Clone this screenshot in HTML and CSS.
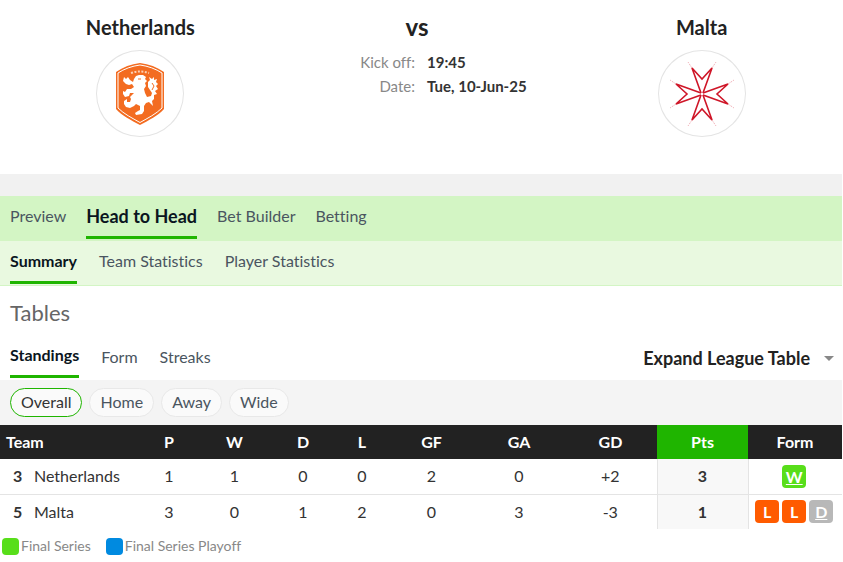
FILE: index.html
```html
<!DOCTYPE html>
<html lang="en">

<head>
    <meta charset="UTF-8">
    <meta name="viewport" content="width=device-width, initial-scale=1.0">
    <title>Netherlands vs Malta</title>
    <link rel="stylesheet" href="styles.css">
</head>

<body>
    <div class="container">
        <!-- match header -->
        <header class="match">
            <div class="team">
                <h2 class="team-name">Netherlands</h2>
                <div class="team-logo">
                    <svg width="48" height="62" viewBox="0 0 48 62" role="img" aria-label="Netherlands">
                        <path fill="#f36c21" d="M24 0C33 1 41 4 48 9V46C42 53 33 57 24 62C15 57 6 53 0 46V9C7 4 15 1 24 0Z"/>
                        <path fill="none" stroke="#fff" stroke-width="1" d="M24 2C32 3 40 6 46 10V45C40 51 32 55 24 59.500C16 55 8 51 2 45V10C8 6 16 3 24 2Z"/>
                        <path fill="none" stroke="#fbd0b4" stroke-width="2" stroke-dasharray="2 1.500" d="M15 10Q24 7 33 10"/>
                        <path fill="#fff" d="M18 16L20 13L23 12L27 12L30 14L29 16L31 18L29 20L30 23L28 26L29 30L31 34L35 33L36 30L34 27L32 24L32 19L34 17L33 14L36 16L38 14L38 17L41 16L40 19L42 21L40 23L42 26L39 28L41 31L38 32L38 36L36 38L37 43L35 41L33 39L30 40L28 43L28 48L26 51L20 52L19 50L22 48L24 47L24 43L20 41L18 43L14 45L10 44L8 41L8 38L11 36L11 39L14 39L15 36L14 34L18 30L14 30L13 33L9 34L7 31L7 28L9 29L11 26L15 26L18 24L16 21L13 22L10 21L7 18L8 14L10 16L12 14L14 17L17 19Z"/>
                        <path fill="none" stroke="#f36c21" stroke-width="1" d="M22 16L25 16M36 20L38 23L36 27"/>
                    </svg>
                </div>
            </div>
            <div class="info">
                <h2 class="vs">vs</h2>
                <dl class="info-list">
                    <dt>Kick off:</dt>
                    <dd>19:45</dd>
                    <dt>Date:</dt>
                    <dd>Tue, 10-Jun-25</dd>
                </dl>
            </div>
            <div class="team">
                <h2 class="team-name">Malta</h2>
                <div class="team-logo">
                    <svg width="64" height="64" viewBox="0 0 64 64" role="img" aria-label="Malta">
                        <g fill="none" stroke="#f2b6bd" stroke-width="1" stroke-dasharray="2 1">
                            <path d="M22 6L18 0M42 6L46 0M22 58L18 64M42 58L46 64M6 22L0 18M6 42L0 46M58 22L64 18M58 42L64 46"/>
                        </g>
                        <g fill="none" stroke="#cf1628" stroke-width="1.600">
                            <path d="M31 31L22 6L32 17L42 6L33 31"/>
                            <path d="M31 33L22 58L32 47L42 58L33 33"/>
                            <path d="M31 31L6 22L17 32L6 42L31 33"/>
                            <path d="M33 31L58 22L47 32L58 42L33 33"/>
                        </g>
                    </svg>
                </div>
            </div>
        </header>

        <!-- main tabs -->
        <nav class="tabs tabs-main">
            <a href="#preview">Preview</a>
            <a href="#h2h" class="active">Head to Head</a>
            <a href="#builder">Bet Builder</a>
            <a href="#betting">Betting</a>
        </nav>
        <nav class="tabs tabs-sub">
            <a href="#summary" class="active">Summary</a>
            <a href="#team-stats">Team Statistics</a>
            <a href="#player-stats">Player Statistics</a>
        </nav>

        <h3 class="title">Tables</h3>

        <div class="table-bar">
            <nav class="tabs tabs-table">
                <a href="#standings" class="active">Standings</a>
                <a href="#form">Form</a>
                <a href="#streaks">Streaks</a>
            </nav>
            <button type="button" class="expand-btn">Expand League Table</button>
        </div>

        <div class="filter">
            <button type="button" class="filter-btn active">Overall</button>
            <button type="button" class="filter-btn">Home</button>
            <button type="button" class="filter-btn">Away</button>
            <button type="button" class="filter-btn">Wide</button>
        </div>

        <!-- standings -->
        <table class="standings">
            <colgroup>
                <col class="col-team">
                <col class="col-p">
                <col class="col-w">
                <col class="col-d">
                <col class="col-l">
                <col class="col-gf">
                <col class="col-ga">
                <col class="col-gd">
                <col class="col-pts">
                <col class="col-form">
            </colgroup>
            <thead>
                <tr>
                    <th class="name">Team</th>
                    <th>P</th>
                    <th>W</th>
                    <th>D</th>
                    <th>L</th>
                    <th>GF</th>
                    <th>GA</th>
                    <th>GD</th>
                    <th class="pts">Pts</th>
                    <th>Form</th>
                </tr>
            </thead>
            <tbody>
                <tr>
                    <td class="name"><b class="rank">3</b>Netherlands</td>
                    <td>1</td>
                    <td>1</td>
                    <td>0</td>
                    <td>0</td>
                    <td>2</td>
                    <td>0</td>
                    <td>+2</td>
                    <td class="pts">3</td>
                    <td>
                        <div class="form">
                            <a href="#match" class="win last">W</a>
                        </div>
                    </td>
                </tr>
                <tr>
                    <td class="name"><b class="rank">5</b>Malta</td>
                    <td>3</td>
                    <td>0</td>
                    <td>1</td>
                    <td>2</td>
                    <td>0</td>
                    <td>3</td>
                    <td>-3</td>
                    <td class="pts">1</td>
                    <td>
                        <div class="form">
                            <a href="#match" class="loss">L</a>
                            <a href="#match" class="loss">L</a>
                            <a href="#match" class="draw last">D</a>
                        </div>
                    </td>
                </tr>
            </tbody>
        </table>

        <ul class="legend">
            <li class="final">Final Series</li>
            <li class="playoff">Final Series Playoff</li>
        </ul>
    </div>
</body>

</html>
```
FILE: styles.css
```css
* {
    margin: 0;
    padding: 0;
    box-sizing: border-box;
}

body {
    font-family: Lato, "Liberation Sans", sans-serif;
    font-size: 16px;
    line-height: 24px;
    font-variant-ligatures: none;
    color: #333;
    background-color: #fff;
}

a {
    color: inherit;
    text-decoration: none;
}

button {
    font: inherit;
    font-variant-ligatures: none;
    cursor: pointer;
}

.container {
    padding-right: 1px;
}

/* match header */
.match {
    display: grid;
    grid-template-columns: repeat(3, 1fr);
    padding: 15px 0 37px;
    border-bottom: 22px solid #f1f1f1;
}

.team {
    display: flex;
    flex-direction: column;
    align-items: center;
    gap: 11px;
}

.team-name,
.vs {
    font-size: 20px;
    line-height: 24px;
    font-weight: bold;
    color: #222;
}

.vs {
    font-size: 24px;
    text-align: center;
    padding-right: 8px;
}

.team-logo {
    display: flex;
    align-items: center;
    justify-content: center;
    width: 88px;
    height: 87px;
    border: 1px solid #e4e4e4;
    border-radius: 50%;
}

.info-list {
    display: grid;
    grid-template-columns: 1fr 1fr;
    column-gap: 12px;
    margin-top: 11px;
    font-size: 15px;
}

.info-list dt {
    text-align: right;
    color: #888;
}

.info-list dd {
    font-weight: bold;
    white-space: nowrap;
}

/* tabs */
.tabs {
    display: flex;
    gap: 22px;
    padding: 0 10px;
    color: #4a5560;
}

.tabs a {
    padding: 8px 0;
    border-bottom: 3px solid transparent;
}

.tabs .active {
    font-weight: bold;
    color: #0a1520;
    border-bottom-color: #1fb500;
}

.tabs-main {
    gap: 20px;
    background-color: #d3f5c4;
    padding-bottom: 2px;
}

.tabs-main .active {
    font-size: 18px;
}

.tabs-sub {
    background-color: #e9f9e0;
    padding-bottom: 1px;
    border-bottom: 1px solid #d3f5c4;
}

.title {
    padding: 15px 10px 0;
    font-size: 22px;
    font-weight: normal;
    color: #666;
}

.table-bar {
    display: flex;
    align-items: flex-end;
    justify-content: space-between;
    padding: 10px 8px 2px 0;
}

.tabs-table a:not(.active) {
    padding: 10px 0 6px;
}

.expand-btn {
    display: flex;
    align-items: center;
    gap: 14px;
    padding-bottom: 8px;
    border: none;
    background: none;
    font-size: 18px;
    font-weight: bold;
    color: #222;
}

.expand-btn::after {
    content: "";
    border: 5px solid transparent;
    border-top-color: #888;
    border-bottom: none;
}

/* filters */
.filter {
    display: flex;
    gap: 7px;
    padding: 8px 10px;
    background-color: #f4f4f4;
}

.filter-btn {
    height: 29px;
    padding: 0 10px 2px;
    border: 1px solid #e8e8e8;
    border-radius: 15px;
    background-color: #fafafa;
    color: #4a5560;
}

.filter-btn.active {
    border-color: #1fb500;
    color: #333;
}

/* standings */
.standings {
    width: 100%;
    table-layout: fixed;
    border-collapse: collapse;
    text-align: center;
}

.col-team { width: 140px; }
.col-p { width: 58px; }
.col-w { width: 73px; }
.col-d { width: 64px; }
.col-l { width: 54px; }
.col-gf { width: 85px; }
.col-ga { width: 90px; }
.col-gd { width: 93px; }
.col-pts { width: 91px; }
.col-form { width: 94px; }

.standings th {
    height: 34px;
    background-color: #222;
    color: #fff;
}

.standings th.pts {
    background-color: #1fb500;
}

.standings td {
    height: 35px;
}

.standings tbody tr + tr td {
    border-top: 1px solid #e4e4e4;
}

.standings .name {
    padding-left: 6px;
    text-align: left;
}

.rank {
    display: inline-block;
    width: 28px;
    padding-left: 7px;
}

.standings td.pts {
    font-weight: bold;
    background-color: #f8f8f8;
    border-left: 1px solid #e4e4e4;
    border-right: 1px solid #e4e4e4;
}

.form {
    display: flex;
    justify-content: center;
    gap: 3px;
    padding-right: 2px;
}

.form a {
    width: 24px;
    height: 23px;
    line-height: 23px;
    border-radius: 4px;
    font-weight: bold;
    color: #fff;
}

.form .last {
    text-decoration: underline;
}

.win {
    background-color: #58de1a;
}

.loss {
    background-color: #ff5b00;
}

.draw {
    background-color: #b8b8b8;
}

/* legend */
.legend {
    display: flex;
    gap: 15px;
    padding: 5px 2px;
    list-style: none;
    font-size: 14px;
    color: #888;
}

.legend li {
    display: flex;
    align-items: center;
    gap: 2px;
}

.legend li::before {
    content: "";
    width: 17px;
    height: 17px;
    border-radius: 4px;
}

.final::before {
    background-color: #58de1a;
}

.playoff::before {
    background-color: #008ae0;
}
```
